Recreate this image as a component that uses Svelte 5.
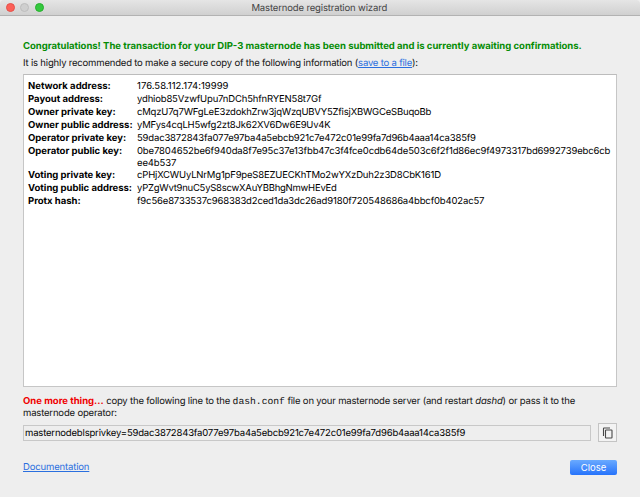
<script>
  const rows = [
    { label: 'Network address:', value: '176.58.112.174:19999', tracking: 0.02 },
    { label: 'Payout address:', value: 'ydhiob85VzwfUpu7nDCh5hfnRYEN58t7Gf', tracking: -0.17 },
    { label: 'Owner private key:', value: 'cMqzU7q7WFgLeE3zdokhZrw3jqWzqUBVY5ZfisjXBWGCeSBuqoBb', tracking: -0.2 },
    { label: 'Owner public address:', value: 'yMFys4cqLH5wfg2zt8Jk62XV6Dw6E9Uv4K', tracking: -0.2 },
    { label: 'Operator private key:', value: '59dac3872843fa077e97ba4a5ebcb921c7e472c01e99fa7d96b4aaa14ca385f9', tracking: -0.168 },
    { label: 'Operator public key:', value: '0be7804652be6f940da8f7e95c37e13fbb47c3f4fce0cdb64de503c6f2f1d86ec9f4973317bd6992739ebc6cb', rest: 'ee4b537', tracking: -0.13 },
    { label: 'Voting private key:', value: 'cPHjXCWUyLNrMg1pF9peS8EZUECKhTMo2wYXzDuh2z3D8CbK161D', tracking: -0.18 },
    { label: 'Voting public address:', value: 'yPZgWvt9nuC5yS8scwXAuYBBhgNmwHEvEd', tracking: -0.24 },
    { label: 'Protx hash:', value: 'f9c56e8733537c968383d2ced1da3dc26ad9180f720548686a4bbcf0b402ac57', tracking: -0.15 }
  ];
</script>

<div class="window">
  <header>
    <div class="lights"><i class="red"></i><i class="grey"></i><i class="green"></i></div>
    <span class="title">Masternode registration wizard</span>
  </header>
  <main>
    <p class="success">Congratulations! The transaction for your DIP-3 masternode has been submitted and is currently awaiting confirmations.</p>
    <p class="advice">It is highly recommended to make a secure copy of the following information (<a href="#save">save to a file</a>):</p>
    <section class="details">
      {#each rows as row}
        <div class="row" class:double={row.rest}>
          <b>{row.label}</b>
          <span class="value" style="letter-spacing: {row.tracking}px">{row.value}{#if row.rest}<br />{row.rest}{/if}</span>
        </div>
      {/each}
    </section>
    <p class="more"><strong>One more thing...</strong> copy the following line to the <code>dash.conf</code> file on your masternode server (and restart <em>dashd</em>) or pass it to the<br />masternode operator:</p>
    <div class="copyline">
      <div class="field">masternodeblsprivkey=59dac3872843fa077e97ba4a5ebcb921c7e472c01e99fa7d96b4aaa14ca385f9</div>
      <button class="copy" aria-label="Copy">
        <svg width="12" height="12" viewBox="0 0 12 12" fill="none" stroke="#484848" stroke-width="1.1">
          <path d="M1.5 9V1.5Q1.5 1 2 1H8" />
          <rect x="3.5" y="3" width="6.5" height="8" rx="0.6" />
        </svg>
      </button>
    </div>
    <footer>
      <a href="#docs">Documentation</a>
      <button class="close">Close</button>
    </footer>
  </main>
</div>

<style>
  :global(body) { background: #eee; }
  .window {
    width: 640px; height: 497px; box-sizing: border-box; overflow: hidden;
    background: #eee; color: #111;
    font: 9.5px/12px Inter, sans-serif;
    text-rendering: geometricPrecision;
    white-space: nowrap;
  }
  header {
    height: 16px; display: grid; grid-template-columns: 1fr auto 1fr; align-items: center;
    background: linear-gradient(#e5e5e5, #d0d0d0);
    border-bottom: 1px solid #b2b2b2;
    border-radius: 4px 4px 0 0;
    box-sizing: border-box;
  }
  .lights { display: flex; gap: 5.5px; padding-left: 5.5px; }
  .lights i { width: 9px; height: 9px; border-radius: 50%; box-sizing: border-box; }
  .red { background: #fc6058; border: 1px solid #e5514a; }
  .grey { background: #cfcfcf; border: 1px solid #bdbdbd; }
  .green { background: #34c83e; border: 1px solid #25b02d; }
  .title { color: #444; letter-spacing: -0.14px; padding: 2px 1.5px 0 0; }
  main { padding: 25px 23px 0; }
  p { margin: 0; }
  .success { height: 17px; font-weight: 700; color: #058c05; }
  .advice { height: 16px; letter-spacing: -0.185px; }
  a { color: #2a6fdf; text-decoration: underline; text-underline-offset: 1px; text-decoration-thickness: 1px; }
  .details {
    height: 313px; box-sizing: border-box; background: #fff;
    border: 1px solid #c6c6c6; border-top-color: #bcbcbc;
    padding: 6px 4px 0; color: #000;
  }
  .row { display: grid; grid-template-columns: 109px auto; line-height: 11.5px; padding-bottom: 1.5px; }
  .row.double { padding-bottom: 1px; }
  .row b { font-weight: 700; }
  .more { margin-top: 9px; line-height: 11.5px; letter-spacing: -0.17px; }
  .more strong { color: #f00000; letter-spacing: 0; }
  code { font-family: "Liberation Mono", monospace; font-size: 9.7px; line-height: 1; letter-spacing: 0; }
  .copyline { display: flex; align-items: center; justify-content: space-between; height: 19px; margin-top: 4px; }
  .field { width: 568px; height: 16px; line-height: 16px; padding-left: 1px; box-sizing: border-box; border: 1px solid #c8c8c8; letter-spacing: -0.175px; color: #000; }
  button { font: inherit; padding: 0; }
  .copy { width: 19px; height: 19px; display: grid; place-items: center; background: #f3f3f3; border: 1px solid #c4c4c4; }
  footer { display: flex; justify-content: space-between; align-items: center; height: 16px; margin-top: 17px; }
  footer a { letter-spacing: -0.15px; padding-top: 2px; }
  .close { width: 47px; height: 15px; border: 0; border-radius: 2px; padding-top: 1px; color: #fff; background: linear-gradient(#6aaaff, #2673fb); }
</style>
